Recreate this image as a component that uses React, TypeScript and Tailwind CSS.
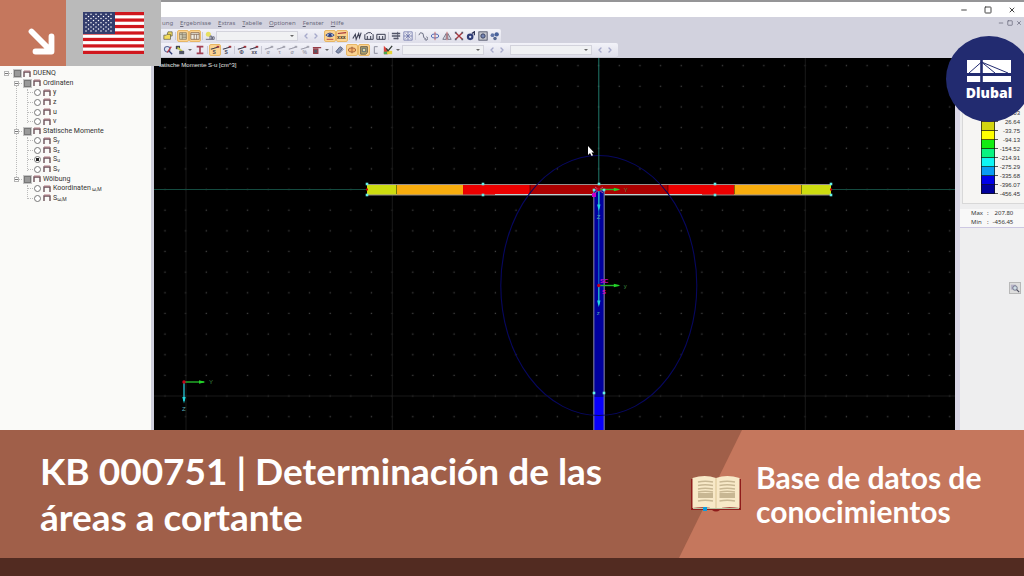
import type { ReactNode } from "react";
import { ChevronLeft, ChevronRight, Minus, Square, X } from "lucide-react";

type Tool = { name: string; art: ReactNode; active?: boolean };

const navy = "#2f3c78";

const BeamMark = ({ label, muted }: { label: string; muted?: boolean }) => (
  <g>
    <path d="M1 5L5 4L11 2" fill="none" stroke={muted ? "#9a9aa8" : "#3a3a4c"} strokeWidth="1.3" />
    <rect x="8" y="1" width="3" height="2" fill={muted ? "#a5a5b0" : "#a8323a"} />
    <text x="3" y="11" fontSize="6" fontFamily="Liberation Sans, sans-serif" fontWeight="bold" fill={muted ? "#9a9aa8" : "#444456"}>
      {label}
    </text>
  </g>
);

const MeasureArt = () => (
  <path d="M1 4V10H11V4M4 10V6M8 10V6M2 4L5 2H8L10 4" fill="none" stroke="#3d4054" strokeWidth="1.2" />
);

const fileTools: Tool[] = [
  { name: "Open", art: <path d="M1 5H4L5 4H9V10H1ZM5 4L6 1H11V6H9" fill="#f3dc5c" stroke="#55523c" strokeWidth=".8" /> },
];

const viewTools: Tool[] = [
  { name: "Navigator", active: true, art: <path d="M2 2H10V10H2ZM5 2V10M2 4H10M5 6H10M5 8H10" fill="#ddd8c0" stroke="#756c58" strokeWidth=".8" /> },
  { name: "Tables", active: true, art: <path d="M1 2H11V10H1ZM1 4H11M5 4V10M8 4V10" fill="#f2eee4" stroke="#7c604c" strokeWidth=".9" /> },
];

const caseTools: Tool[] = [
  { name: "Load case", art: <><circle cx="4" cy="4" r="3" fill="#e6df62" /><path d="M6 10V6H8V10M9 10V7H11V10M1 10H11" stroke="#55596e" fill="none" /></> },
];

const resultTools: Tool[] = [
  { name: "Show results", active: true, art: <><path d="M1 5Q6 0 11 5Q6 9 1 5Z" fill="#c3d8f2" stroke={navy} /><circle cx="6" cy="5" r="2" fill={navy} /><path d="M2 10H10" stroke="#a8323a" /></> },
  { name: "Show values", active: true, art: <><path d="M1 3L11 2" stroke="#a8323a" strokeWidth="1.4" /><text x="0" y="9" fontSize="6" fontWeight="bold" fill="#4b3b30">xxx</text></> },
];

const measureTools: Tool[] = [
  { name: "Diagram", art: <path d="M1 9L4 4L5 10L8 3L9 8L11 2" fill="none" stroke="#3d4054" strokeWidth="1.3" /> },
  { name: "Dimension", art: <MeasureArt /> },
  { name: "Dimension lines", art: <path d="M1 4V10H11V4M4 10V6M8 10V6M1 4H11" fill="none" stroke="#3d4054" strokeWidth="1.2" /> },
];

const sectionTools: Tool[] = [
  { name: "Section list", art: <><path d="M1 3H11M1 6H11M3 9H9" stroke="#525568" strokeWidth="1.6" /><path d="M8 1V10" stroke="#525568" /></> },
  { name: "Snap", art: <path d="M1 1H11V11H1ZM6 1V11M1 6H11M3 3L9 9M9 3L3 9" fill="none" stroke="#6971a6" strokeWidth=".9" /> },
];

const editTools: Tool[] = [
  { name: "Polyline", art: <path d="M1 5L3 2L6 3L7 8L10 10M8 10A2 2 0 1 0 10 7" fill="none" stroke="#555a70" /> },
  { name: "Rotate", art: <><ellipse cx="6" cy="6" rx="4.5" ry="2.5" fill="none" stroke="#526bb5" strokeWidth="1.2" /><path d="M6 1V11" stroke="#c15558" /></> },
  { name: "Mirror", art: <><path d="M5 3V10H1ZM7 3V10H11Z" fill="none" stroke="#65697c" /><path d="M6 1V11" stroke="#c15558" /></> },
  { name: "Delete", art: <><path d="M2 2L10 10M10 2L2 10" stroke="#a6363d" strokeWidth="1.6" /><path d="M1 1H3V3H1ZM9 1H11V3H9ZM1 9H3V11H1ZM9 9H11V11H9Z" fill="#565a6b" /></> },
  { name: "Rendering", art: <><circle cx="5" cy="7" r="4" fill={navy} /><path d="M7 3L10 1V5" fill="none" stroke="#252b50" strokeWidth="1.5" /><circle cx="5" cy="7" r="1.4" fill="#dfe4f0" /></> },
  { name: "Settings", art: <><rect x="1" y="1" width="10" height="10" fill="#c7c8cf" stroke="#474b60" /><circle cx="6" cy="6" r="2.6" fill="#7585b5" stroke="#303752" /></> },
  { name: "Materials", art: <><circle cx="3" cy="5" r="2.3" fill="#6176a8" /><circle cx="8" cy="4" r="2.6" fill="#49639c" /><circle cx="6" cy="9" r="2.1" fill="#566890" /></> },
];

const zoomTools: Tool[] = [
  { name: "Zoom", art: <><circle cx="5" cy="5" r="3.3" fill="#dce4f5" stroke="#5c6695" strokeWidth="1.3" /><path d="M7 7L11 11" stroke={navy} strokeWidth="1.6" /><path d="M5 9L10 2" stroke="#c2393e" strokeWidth="1.5" /></> },
  { name: "Display", art: <><path d="M1 1H6V5H1Z" fill="#3f4350" /><path d="M3 3L9 8" stroke="#c9ce4e" strokeWidth="2" /><path d="M5 7H11V11H5Z" fill="#505565" /></> },
];

const profileTools: Tool[] = [
  { name: "Profile", art: <path d="M2 2H10M6 2V10M2 10H10" stroke="#a33f52" strokeWidth="2" /> },
];

const momentTools: Tool[] = [
  { name: "Static moment Su", active: true, art: <BeamMark label="S" /> },
  { name: "Static moment Sv", art: <BeamMark label="S" /> },
];

const loadTools: Tool[] = [
  { name: "Warping", art: <BeamMark label="Φ" /> },
  { name: "Stress values", art: <BeamMark label="xx" /> },
];

const stressTools: Tool[] = [
  { name: "Sigma", art: <BeamMark label="σ" muted /> },
  { name: "Tau", art: <BeamMark label="τ" muted /> },
  { name: "Sigma v", art: <BeamMark label="σ" muted /> },
  { name: "Ratio", art: <BeamMark label="%" muted /> },
  { name: "Colors", art: <path d="M1 3H11M2 5H7V10H2Z" fill="#555866" stroke="#963c46" strokeWidth="1.5" /> },
];

const drawTools: Tool[] = [
  { name: "Isolines", art: <path d="M1 8L6 2L9 4L4 10ZM5 10L10 5" fill="#8794b3" stroke="#475274" /> },
  { name: "Core", active: true, art: <><ellipse cx="6" cy="6" rx="4.5" ry="2.6" fill="#f6b065" stroke="#9a5936" /><path d="M6 2V10" stroke="#9a5936" /></> },
  { name: "Filled", active: true, art: <><path d="M2 2H10V9L8 11H2Z" fill="#b5a66c" stroke="#565044" /><path d="M4 4H8V8H4Z" fill="#e5d6a1" stroke="#4d6476" /></> },
  { name: "Outline", art: <path d="M8 2H4V10H8" fill="none" stroke="#858796" strokeWidth="1.1" /> },
  { name: "Color scale", art: <><path d="M1 1L6 6V11H1Z" fill="#d9423b" /><path d="M1 8H5V11H1Z" fill="#49a952" /><path d="M5 7H11V11H5Z" fill="#e6d53a" /><path d="M4 4L6 7L11 1" fill="none" stroke="#323b34" strokeWidth="1.5" /></> },
];

const menus = ["Ergebnisse", "Extras", "Tabelle", "Optionen", "Fenster", "Hilfe"];

const ToolGroup = ({ tools }: { tools: Tool[] }) => (
  <div className="flex shrink-0">
    {tools.map((tool) => (
      <button
        key={tool.name}
        type="button"
        aria-label={tool.name}
        className={
          tool.active
            ? "flex h-3 w-3 items-center justify-center rounded-xs border border-[#e8b765] bg-[#fbd391]"
            : "flex h-3 w-3 items-center justify-center"
        }
      >
        <svg viewBox="0 0 12 12" className="h-[10px] w-[10px] shrink-0">{tool.art}</svg>
      </button>
    ))}
  </div>
);

const DropArrow = ({ className }: { className?: string }) => (
  <svg viewBox="0 0 4 2" className={`h-[2px] w-[4px] ${className ?? ""}`}>
    <path d="M0 0H4L2 2Z" fill="#666" />
  </svg>
);

const Combo = ({ label }: { label: string }) => (
  <div className="relative h-[10px] w-[82px] shrink-0">
    <select aria-label={label} className="block h-full w-full appearance-none border border-[#d3d3dc] bg-[#f0f1f3]" />
    <DropArrow className="pointer-events-none absolute top-1 right-1" />
  </div>
);

const Stepper = () => (
  <div className="flex gap-[2px] px-1 text-[#a5a8ca]">
    <button type="button" aria-label="Previous"><ChevronLeft className="h-2 w-2" strokeWidth={4} /></button>
    <button type="button" aria-label="Next"><ChevronRight className="h-2 w-2" strokeWidth={4} /></button>
  </div>
);

const Separator = () => <div className="mx-px h-2 w-px shrink-0 bg-[#c9c9d6]" />;

const WindowChrome = () => (
  <header className="text-[#6a6a7c]">
    <div className="flex h-[17px] items-center justify-end gap-4 border-t-2 border-[#959597] bg-white pr-2 text-[#444]">
      <button type="button" aria-label="Minimize"><Minus className="h-2 w-2" strokeWidth={3} /></button>
      <button type="button" aria-label="Maximize"><Square className="h-2 w-2" strokeWidth={3} /></button>
      <button type="button" aria-label="Close"><X className="h-2 w-2" strokeWidth={3} /></button>
    </div>
    <div className="bg-[#d2d2de]">
      <div className="flex h-3 items-center justify-between pr-[2px] pl-[162px]">
        <nav className="flex gap-[7px] text-[6px] leading-none font-[Noto_Sans,sans-serif]">
          <button type="button">ung</button>
          {menus.map((menu) => (
            <button key={menu} type="button">
              <span className="underline">{menu[0]}</span>{menu.slice(1)}
            </button>
          ))}
        </nav>
        <div className="flex gap-[3px]">
          <button type="button" aria-label="Minimize section"><Minus className="h-[6px] w-[6px]" strokeWidth={3} /></button>
          <button type="button" aria-label="Restore section"><Square className="h-[6px] w-[6px]" strokeWidth={3} /></button>
          <button type="button" aria-label="Close section"><X className="h-[6px] w-[6px]" strokeWidth={3} /></button>
        </div>
      </div>
      <div className="flex h-[14px] w-fit items-center rounded-r-xs bg-linear-to-b from-[#f3f3f9] to-[#dedee9] pl-[162px]">
        <ToolGroup tools={fileTools} />
        <Separator />
        <ToolGroup tools={viewTools} />
        <Separator />
        <ToolGroup tools={caseTools} />
        <Combo label="Load case" />
        <Stepper />
        <ToolGroup tools={resultTools} />
        <Separator />
        <ToolGroup tools={measureTools} />
        <Separator />
        <ToolGroup tools={sectionTools} />
        <Separator />
        <ToolGroup tools={editTools} />
      </div>
      <div className="flex h-[15px] w-fit items-center rounded-r-xs border-b border-[#c8c8d2] bg-linear-to-b from-[#f3f3f9] to-[#dedee9] pl-[162px]">
        <ToolGroup tools={zoomTools} />
        <DropArrow className="mx-[2px]" />
        <ToolGroup tools={profileTools} />
        <Separator />
        <ToolGroup tools={momentTools} />
        <Separator />
        <ToolGroup tools={loadTools} />
        <Separator />
        <ToolGroup tools={stressTools} />
        <DropArrow className="mx-[2px]" />
        <Separator />
        <ToolGroup tools={drawTools} />
        <DropArrow className="mx-[2px]" />
        <Combo label="Cross-section" />
        <Stepper />
        <Combo label="Element" />
        <Stepper />
      </div>
    </div>
  </header>
);

const SectionIcon = () => (
  <svg viewBox="0 0 8 8" className="h-2 w-2 shrink-0">
    <path d="M1 7V2H7V7" fill="none" stroke="#6b5058" strokeWidth="1.4" />
    <path d="M1 1H7" stroke="#b27c84" />
  </svg>
);

const Branch = ({ label }: { label: string }) => (
  <div className="flex items-center">
    <button type="button" aria-label={`Collapse ${label}`} className="flex h-[5px] w-[5px] items-center border border-[#b5b5b5] bg-white">
      <span className="h-px w-full bg-[#777]" />
    </button>
    <span className="w-[5px] border-t border-dotted border-[#bbb]" />
    <label className="flex items-center">
      <input type="checkbox" defaultChecked className="h-[7px] w-[7px] appearance-none border border-[#777] bg-[#999] outline outline-[#c4c4c4]" />
      <span className="ml-[2px] flex items-center gap-[2px]"><SectionIcon />{label}</span>
    </label>
  </div>
);

const Leaf = ({ label, sub, checked }: { label: string; sub?: string; checked?: boolean }) => (
  <div className="flex items-center pl-6">
    <span className="mr-px w-[5px] border-t border-dotted border-[#bbb]" />
    <label className="flex items-center gap-[2px]">
      <input
        type="radio"
        name="result"
        defaultChecked={checked}
        className="h-[7px] w-[7px] appearance-none rounded-full border border-[#777] bg-white checked:bg-[radial-gradient(#222_45%,#fff_50%)]"
      />
      <SectionIcon />
      <span className="whitespace-pre">
        {label}
        {sub && <span className="relative top-px text-[5px]">{sub}</span>}
      </span>
    </label>
  </div>
);

const Navigator = () => (
  <aside className="w-[154px] shrink-0 border-r-[3px] border-[#cfcfdc] bg-[#fafaf8] pt-[11px] pl-1 text-[7px] leading-none text-[#333] font-[Roboto,sans-serif]">
    <div className="relative grid h-[134px] auto-rows-fr">
      <span className="absolute top-3 left-[12px] h-[98px] border-l border-dotted border-[#bbb]" />
      <span className="absolute top-[20px] left-[23px] h-[34px] border-l border-dotted border-[#bbb]" />
      <span className="absolute top-[68px] left-[23px] h-[34px] border-l border-dotted border-[#bbb]" />
      <span className="absolute top-[116px] left-[23px] h-[14px] border-l border-dotted border-[#bbb]" />
      <Branch label="DUENQ" />
      <div className="relative flex items-center pl-[10px]"><Branch label="Ordinaten" /></div>
      <Leaf label="y" />
      <Leaf label="z" />
      <Leaf label="u" />
      <Leaf label="v" />
      <div className="relative flex items-center pl-[10px]"><Branch label="Statische Momente" /></div>
      <Leaf label="S" sub="y" />
      <Leaf label="S" sub="z" />
      <Leaf label="S" sub="u" checked />
      <Leaf label="S" sub="v" />
      <div className="relative flex items-center pl-[10px]"><Branch label="Wölbung" /></div>
      <Leaf label="Koordinaten" sub=" ω,M" />
      <Leaf label="S" sub="ω,M" />
    </div>
  </aside>
);

const flange = [
  { x: 367, width: 30, fill: "#cddc10" },
  { x: 397, width: 66, fill: "#f8ad0e" },
  { x: 463, width: 67, fill: "#ec0000" },
  { x: 530, width: 138, fill: "#ab0000" },
  { x: 668, width: 66, fill: "#ec0000" },
  { x: 734, width: 67, fill: "#f8ad0e" },
  { x: 801, width: 30, fill: "#cddc10" },
];

const nodes = [
  [367, 184], [367, 195], [483, 184], [483, 195], [715, 184], [715, 195],
  [831, 184], [831, 195], [599, 184], [594, 190], [604, 190], [594, 393], [604, 393],
];

const Axes = ({ x, y, labels }: { x: number; y: number; labels: [string, string] }) => (
  <g fontFamily="Liberation Sans, sans-serif" fontSize="6">
    <path d={`M${x} ${y}H${x + 20}`} stroke="#25b52b" strokeWidth="1.4" />
    <path d={`M${x + 15} ${y - 1.7}L${x + 21.5} ${y}L${x + 15} ${y + 1.7}Z`} fill="#23d429" />
    <path d={`M${x} ${y}V${y + 19}`} stroke="#25b9c9" strokeWidth="1.4" />
    <path d={`M${x - 1.7} ${y + 15}L${x} ${y + 21.5}L${x + 1.7} ${y + 15}Z`} fill="#22d8df" />
    <circle cx={x} cy={y} r="1.7" fill="#c40018" />
    <text x={x + 25} y={y + 2} fill="#3f9144">{labels[0]}</text>
    <text x={x - 2} y={y + 29} fill="#58aab5">{labels[1]}</text>
  </g>
);

const Workspace = () => (
  <main className="relative min-w-0 flex-1 overflow-hidden bg-black">
    <svg viewBox="154 58 801 372" preserveAspectRatio="xMidYMin slice" className="absolute inset-0 h-full w-full">
      <defs>
        <pattern id="dots" x="588.4" y="179.3" width="20.65" height="20.65" patternUnits="userSpaceOnUse">
          <rect x="9.6" y="9.6" width="1.3" height="1.3" fill="#444" />
        </pattern>
      </defs>
      <rect x="154" y="58" width="801" height="372" fill="url(#dots)" />
      <path d="M186 58V430M392.3 58V430M805.3 58V430M154 396H955" stroke="#191919" />
      <path d="M154 189.5H367M831 189.5H955" stroke="#154b40" />
      <text x="159" y="67" fontSize="6" fontFamily="Liberation Sans, sans-serif" fill="#e6e6e6">tatische Momente S-u [cm^3]</text>
      {flange.map((part) => (
        <rect key={part.x} x={part.x} y="184" width={part.width} height="11" fill={part.fill} />
      ))}
      <path d="M396.5 185V194M530 185V194M668 185V194M734.5 185V194M801.5 185V194" stroke="#000" strokeOpacity=".45" />
      <path d="M367 184.5H831M367 195H831" stroke="#98908f" />
      <path d="M495 194.5H702" stroke="#bed1d1" />
      <rect x="594" y="190" width="10" height="207" fill="#00009e" />
      <rect x="594" y="397" width="10" height="33" fill="#0800fb" />
      <path d="M593.8 190V430M604.2 190V430" stroke="#74749b" strokeWidth="1.2" />
      <ellipse cx="598.8" cy="285.5" rx="98" ry="130" fill="none" stroke="#07075f" strokeWidth="1.1" />
      <path d="M598.8 58V184" stroke="#21796b" />
      <path d="M598.8 190V285" stroke="#1682c9" />
      <rect x="592" y="193" width="4" height="4" fill="#c800c4" />
      <path d="M594 190H604M595 187L603 193M603 187L595 193" stroke="#c04b8e" />
      <Axes x={598.8} y={189.5} labels={["Y", "Z"]} />
      <Axes x={598.8} y={285.5} labels={["y", "z"]} />
      <Axes x={184} y={382} labels={["Y", "Z"]} />
      <g fill="#d400d0" fontSize="6" fontWeight="bold" fontFamily="Liberation Sans, sans-serif">
        <text x="600" y="283">SC</text>
        <text x="602" y="294">S</text>
      </g>
      {nodes.map(([x, y]) => (
        <rect key={`${x}-${y}`} x={x - 1.3} y={y - 1.3} width="2.6" height="2.6" fill="#63efe9" />
      ))}
      <path d="M366 189.5H368M830 189.5H832" stroke="#d60000" strokeWidth="2" />
      <path d="M588 146V155L590 153L591.6 156L593 155.3L591.5 152.6H594Z" fill="#fff" />
    </svg>
  </main>
);

const scale = [
  { color: "#ab0000", value: "147.42" },
  { color: "#ec0000", value: "87.03" },
  { color: "#f8ad0e", value: "26.64" },
  { color: "#d3d40f", value: "-33.75" },
  { color: "#ffff00", value: "-94.13" },
  { color: "#12ed12", value: "-154.52" },
  { color: "#08f480", value: "-214.91" },
  { color: "#0ff6f4", value: "-275.29" },
  { color: "#0a9cf2", value: "-335.68" },
  { color: "#0000e8", value: "-396.07" },
  { color: "#00009c", value: "-456.45" },
];

const ScalePanel = () => (
  <aside className="w-[69px] shrink-0 border-l-[5px] border-[#d9d6e6] bg-[#eeeeef] text-[6px] leading-none text-[#333] font-[Liberation_Sans,sans-serif]">
    <div className="ml-[2px] border-b border-l border-[#d8d8d8] bg-[#f6f5f3] pt-[37px] pr-1 pb-[9px] pl-[18px]">
      <ul>
        {scale.map((step) => (
          <li key={step.value} className="flex h-[9px]">
            <svg viewBox="0 0 18 9" className="h-[9px] w-[18px] shrink-0">
              <rect width="14" height="9" fill={step.color} />
              <path d="M.5 0V9M13.5 0V9M0 8.5H17" stroke="#111" strokeOpacity=".7" />
            </svg>
            <span className="relative top-[6px] flex-1 text-right">{step.value}</span>
          </li>
        ))}
      </ul>
    </div>
    <dl className="mt-[5px] grid grid-cols-[auto_auto_1fr] gap-x-1 border-b border-[#cdc8e2] bg-[#f8f8f8] pr-3 pl-[11px] leading-[9px] font-[Noto_Sans,sans-serif]">
      <dt>Max</dt><dd>:</dd><dd className="text-right">207.80</dd>
      <dt>Min</dt><dd>:</dd><dd className="text-right">-456.45</dd>
    </dl>
    <div className="flex justify-end pt-[54px] pr-[3px]">
      <button type="button" aria-label="Show details" className="flex h-3 w-3 items-center justify-center border border-[#b8b8b8] bg-[#ddd]">
        <svg viewBox="0 0 12 12" className="h-[10px] w-[10px]">
          <path d="M1 2H7V8H1Z" fill="#b8b4c8" />
          <circle cx="6" cy="6" r="2.7" fill="#cddbe4" stroke="#656880" />
          <path d="M8 8L11 11" stroke="#505060" strokeWidth="1.5" />
        </svg>
      </button>
    </div>
  </aside>
);

const stars = Array.from({ length: 9 }, (_, row) =>
  Array.from({ length: row % 2 ? 5 : 6 }, (_, col) => ({
    x: 3 + col * 5 + (row % 2 ? 2.5 : 0),
    y: 2.3 + row * 2.1,
  })),
).flat();

const Flag = () => (
  <svg viewBox="0 0 61 42" className="h-[42px] w-[61px]" role="img" aria-label="English">
    <rect width="61" height="42" fill="#fff" />
    {Array.from({ length: 7 }, (_, i) => (
      <rect key={i} y={i * 6.46} width="61" height="3.23" fill="#d0171e" />
    ))}
    <rect width="32" height="22" fill="#333d6d" />
    {stars.map((star) => (
      <circle key={`${star.x}-${star.y}`} cx={star.x} cy={star.y} r=".75" fill="#fff" />
    ))}
  </svg>
);

const CornerBadges = () => (
  <div className="absolute top-0 left-0 flex h-[66px]">
    <div className="w-[66px] bg-[#c5775d]">
      <svg viewBox="0 0 66 66" className="h-full w-full">
        <path d="M31.5 31.5L51 51M51.5 36.500V51.5H35.5" fill="none" stroke="#fff" strokeWidth="5.8" strokeLinecap="round" strokeLinejoin="round" />
      </svg>
    </div>
    <div className="flex w-[95px] justify-center bg-[#bababa] pt-3">
      <Flag />
    </div>
  </div>
);

const Logo = () => (
  <div className="absolute top-9 -right-2 flex h-[86px] w-[86px] flex-col items-center rounded-full bg-[#222b70] pt-[23px] text-white">
    <svg viewBox="0 0 44 24" className="h-6 w-11">
      <path d="M0 1H44V14H0ZM0 17H44V23H0Z" fill="#fff" />
      <path d="M14.5 1V23" stroke="#222b70" strokeWidth="2.6" />
      <path d="M2 14L14.5 3L28 14M14.5 3L41 14M0 14.5H44" fill="none" stroke="#222b70" strokeWidth="1" />
    </svg>
    <span className="mt-[2px] text-[14px] leading-4 font-extrabold font-[Open_Sans,sans-serif]">Dlubal</span>
  </div>
);

const textLines = [6, 9.5, 13, 16, 25];

const Book = () => (
  <svg viewBox="0 0 50 36" className="h-9 w-[50px] shrink-0">
    <path d="M0 3H50V34H29Q25 37 21 34H0Z" fill="#8f1c1b" />
    <path d="M1.5 32V2Q14-2 25 2Q36-2 48.5 2V32Q36 30 25 33Q14 30 1.5 32Z" fill="#f8e9c8" />
    <path d="M25 2V33" stroke="#e4cfa4" strokeWidth="1.5" />
    <path d="M2 32.5H48" stroke="#bcc2a2" />
    {textLines.map((y) => (
      <path key={y} d={`M7 ${y}Q14 ${y - 1.5} 22 ${y}M28.5 ${y}Q36 ${y - 1.5} 44 ${y}`} fill="none" stroke="#c8b793" strokeWidth="1.4" />
    ))}
    <path d="M7 17H22V22H7ZM28.5 17H44V22H28.5Z" fill="#c8b793" />
    <path d="M12 31H16V35H12Z" fill="#0d9bdc" />
  </svg>
);

const Banner = () => (
  <footer className="relative border-b-[18px] border-[#522b21] bg-[#a05f49] text-white font-[Lato,sans-serif]">
    <div className="absolute inset-y-0 right-0 w-[345px] bg-[#c5775d] [clip-path:polygon(63px_0,100%_0,100%_100%,0_100%)]" />
    <div className="relative flex h-32 items-center justify-between pl-10">
      <h1 className="text-[37px] leading-[46px] font-bold">
        KB 000751 | Determinación de las
        <br />
        áreas a cortante
      </h1>
      <div className="flex w-[333px] shrink-0 items-center gap-[15px]">
        <Book />
        <p className="text-[30px] leading-[34px] font-bold">
          Base de datos de
          <br />
          conocimientos
        </p>
      </div>
    </div>
  </footer>
);

const App = () => {
  return (
    <div className="relative flex min-h-screen flex-col overflow-hidden">
      <WindowChrome />
      <div className="flex flex-1">
        <Navigator />
        <Workspace />
        <ScalePanel />
      </div>
      <Banner />
      <CornerBadges />
      <Logo />
    </div>
  );
};

export default App;
